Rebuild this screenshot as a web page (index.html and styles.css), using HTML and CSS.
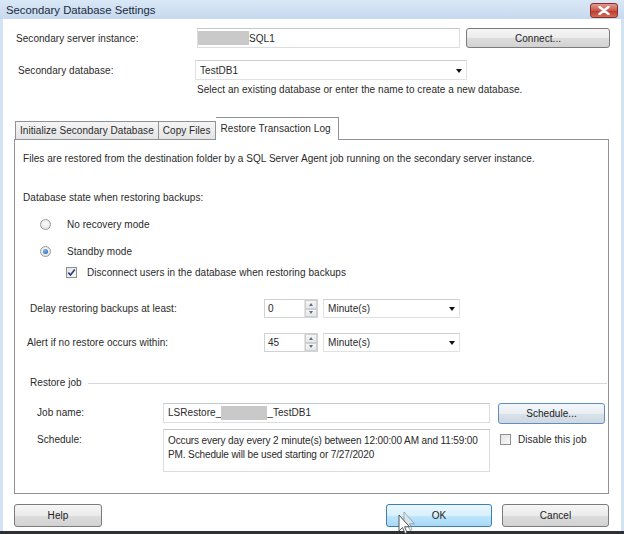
FILE: index.html
```html
<!DOCTYPE html>
<html>
<head>
<meta charset="utf-8">
<link rel="stylesheet" href="styles.css">
</head>
<body>
<div class="window">
  <div class="titlebar">
    <span class="title">Secondary Database Settings</span>
    <div class="close">
      <svg width="12" height="9" viewBox="0 0 12 9"><path d="M1.5 1 L10.5 8 M10.5 1 L1.5 8" stroke="#fff" stroke-width="2.4" stroke-linecap="round"/></svg>
    </div>
  </div>
  <div class="client">
    <div class="row r1">
      <span class="lbl l1">Secondary server instance:</span>
      <div class="field server"><span class="redact"></span><span>SQL1</span></div>
      <div class="btn connect">Connect...</div>
    </div>
    <div class="row r2">
      <span class="lbl l2">Secondary database:</span>
      <div class="combo db"><span>TestDB1</span><span class="arrow"></span></div>
    </div>
    <div class="hint">Select an existing database or enter the name to create a new database.</div>

    <div class="tabs">
      <div class="tab">Initialize Secondary Database</div>
      <div class="tab">Copy Files</div>
      <div class="tab active">Restore Transaction Log</div>
    </div>
    <div class="panel">
      <div class="p1">Files are restored from the destination folder by a SQL Server Agent job running on the secondary server instance.</div>
      <div class="p2">Database state when restoring backups:</div>
      <div class="opt radio-row r-first"><span class="radio"></span><span>No recovery mode</span></div>
      <div class="opt radio-row r-second"><span class="radio on"></span><span>Standby mode</span></div>
      <div class="opt check-row"><span class="check on"><svg width="9" height="9" viewBox="0 0 9 9"><path d="M1.3 4.6 L3.5 7 L7.8 1.5" fill="none" stroke="#24407a" stroke-width="1.6"/></svg></span><span>Disconnect users in the database when restoring backups</span></div>

      <div class="spinrow delay">
        <span class="slbl sl1">Delay restoring backups at least:</span>
        <div class="spin"><span class="sval">0</span><span class="sbtns"><span class="sup"></span><span class="sdn"></span></span></div>
        <div class="combo unit"><span>Minute(s)</span><span class="arrow"></span></div>
      </div>
      <div class="spinrow alert">
        <span class="slbl sl2">Alert if no restore occurs within:</span>
        <div class="spin"><span class="sval">45</span><span class="sbtns"><span class="sup"></span><span class="sdn"></span></span></div>
        <div class="combo unit"><span>Minute(s)</span><span class="arrow"></span></div>
      </div>

      <div class="group"><span>Restore job</span><span class="gline"></span></div>

      <div class="jobrow">
        <span class="jlbl">Job name:</span>
        <div class="field jobname"><span>LSRestore_</span><span class="redact r2b"></span><span>_TestDB1</span></div>
        <div class="btn sched">Schedule...</div>
      </div>
      <div class="jobrow schedrow">
        <span class="jlbl">Schedule:</span>
        <div class="field schedtext">Occurs every day every 2 minute(s) between 12:00:00 AM and 11:59:00<br>PM. Schedule will be used starting or 7/27/2020</div>
        <div class="disable"><span class="check"></span><span>Disable this job</span></div>
      </div>
    </div>

    <div class="footer">
      <div class="btn help">Help</div>
      <div class="spacer"></div>
      <div class="btn ok">OK
        <svg class="cursor" width="22" height="24" viewBox="0 0 22 24">
          <path d="M6 1 L6 17 L9.5 13.5 L12 19.5 L14 18.6 L11.6 12.8 L16.5 12.8 Z" fill="#e8e8e8" stroke="#777" stroke-width="0.8" opacity="0.7"/>
          <path d="M1 4 L1 20 L4.5 16.5 L7 22.5 L9 21.6 L6.6 15.8 L11.5 15.8 Z" fill="#fff" stroke="#444" stroke-width="0.9"/>
        </svg>
      </div>
      <div class="btn cancel">Cancel</div>
    </div>
  </div>
  <div class="taskstrip"></div>
</div>
</body>
</html>
```

FILE: styles.css
```css
* { box-sizing: border-box; }
html, body { margin: 0; padding: 0; }
body {
  width: 624px;
  height: 534px;
  overflow: hidden;
  font-family: "Liberation Sans", Arial, sans-serif;
  font-size: 10px;
  letter-spacing: 0.05px;
  color: #2a2a2a;
  background: #d3e3f4;
}
.window {
  width: 624px;
  height: 534px;
  display: flex;
  flex-direction: column;
}
.titlebar {
  height: 19px;
  flex: none;
  display: flex;
  align-items: center;
  padding-left: 6px;
  background: linear-gradient(#dae8f6, #c6d9ef);
  position: relative;
}
.title {
  font-size: 11.3px;
  color: #1b2a3c;
  letter-spacing: 0;
}
.close {
  position: absolute;
  right: 6px;
  top: 3px;
  width: 28px;
  height: 15px;
  border: 1px solid #8a2f2a;
  border-radius: 3px;
  background: linear-gradient(#e49a8e, #c8574a 50%, #b93a2c 51%, #d26b57);
  display: flex;
  align-items: center;
  justify-content: center;
}
.client {
  flex: 1;
  margin: 0 3px;
  background: #ffffff;
  padding: 9px 11px 0 11px;
  display: flex;
  flex-direction: column;
}
.taskstrip {
  height: 3px;
  flex: none;
  background: #2e3033;
}
.row {
  display: flex;
  align-items: center;
  height: 20px;
}
.r2 { margin-top: 12px; }
.lbl { width: 183px; padding-left: 2px; }
.l2 { padding-left: 4px; }
.field {
  border: 1px solid #dadde1;
  border-top-color: #c4c8cc;
  background: #fff;
  height: 20px;
  display: flex;
  align-items: center;
}
.server { width: 263px; padding-left: 0; }
.redact {
  display: inline-block;
  width: 51px;
  height: 14px;
  background: #c9c9c9;
}
.btn {
  height: 20px;
  border: 1px solid #7b7b7b;
  border-radius: 3px;
  background: linear-gradient(#f6f6f6, #ebebeb 50%, #dddddd 51%, #d2d2d2);
  display: flex;
  align-items: center;
  justify-content: center;
  color: #1c1c1c;
}
.connect { width: 144px; margin-left: 6px; }
.combo {
  border: 1px solid #dfe2e5;
  border-top-color: #ccd0d4;
  height: 20px;
  display: flex;
  align-items: center;
  justify-content: space-between;
  padding-left: 4px;
  padding-right: 4px;
  background: #fff;
}
.db { width: 272px; margin-left: -2px; }
.arrow {
  width: 0;
  height: 0;
  border-left: 3.5px solid transparent;
  border-right: 3.5px solid transparent;
  border-top: 4px solid #111;
  margin-top: 1px;
}
.hint { margin-top: 4px; padding-left: 183px; line-height: 12px; }

.tabs {
  margin-top: 21px;
  height: 22px;
  display: flex;
  align-items: flex-end;
  padding-left: 1px;
}
.tab {
  height: 18px;
  border: 1px solid #8f9296;
  border-bottom: none;
  border-right: none;
  padding: 0 4px;
  display: flex;
  align-items: center;
  background: linear-gradient(#f5f5f5, #e4e4e4);
}
.tab:nth-child(2) { border-right: 1px solid #8f9296; }
.tab.active {
  height: 23px;
  background: #fff;
  margin-bottom: -1px;
  padding: 0 7px 0 5px;
  align-items: flex-start;
  padding-top: 5px;
  position: relative;
  z-index: 1;
  border-left: none;
  border-right: 1px solid #8f9296;
}
.panel {
  height: 355px;
  width: 595px;
  border: 1px solid #8f9296;
  background: #fff;
  padding-left: 8px;
  display: flex;
  flex-direction: column;
}
.p1 { margin-top: 13px; line-height: 12px; }
.p2 { margin-top: 27px; line-height: 12px; }
.opt { display: flex; align-items: center; height: 14px; }
.r-first { margin-top: 13px; padding-left: 17px; }
.r-second { margin-top: 13px; padding-left: 17px; }
.radio {
  width: 11px;
  height: 11px;
  border-radius: 50%;
  border: 1px solid #9a9a9a;
  background: radial-gradient(circle at 50% 40%, #ffffff, #dcdcdc);
  margin-right: 16px;
  position: relative;
}
.radio.on::after {
  content: "";
  position: absolute;
  left: 2px; top: 2px;
  width: 5px; height: 5px;
  border-radius: 50%;
  background: radial-gradient(circle at 40% 35%, #7fb5ec, #1d5aa6);
}
.check-row { margin-top: 7px; padding-left: 43px; }
.check {
  width: 11px;
  height: 11px;
  border: 1px solid #8f8f8f;
  background: linear-gradient(135deg, #e3e3e3, #fbfbfb);
  margin-right: 10px;
  display: flex;
  align-items: center;
  justify-content: center;
}
.spinrow { display: flex; align-items: center; height: 19px; }
.delay { margin-top: 20px; }
.alert { margin-top: 15px; }
.slbl { width: 241px; }
.sl1 { padding-left: 7px; }
.sl2 { padding-left: 4px; }
.spin {
  width: 54px;
  height: 19px;
  border: 1px solid #cfd3d7;
  display: flex;
  align-items: center;
  justify-content: space-between;
  padding-left: 3px;
}
.sbtns {
  width: 13px;
  height: 17px;
  display: flex;
  flex-direction: column;
  border-left: 1px solid #e2e2e2;
}
.sup, .sdn {
  flex: 1;
  display: flex;
  align-items: center;
  justify-content: center;
  background: linear-gradient(#f6f6f6, #e6e6e6);
  border: 1px solid #cfcfcf;
}
.sup::after {
  content: "";
  border-left: 2.5px solid transparent;
  border-right: 2.5px solid transparent;
  border-bottom: 3px solid #5a6f8e;
}
.sdn::after {
  content: "";
  border-left: 2.5px solid transparent;
  border-right: 2.5px solid transparent;
  border-top: 3px solid #5a6f8e;
}
.unit { width: 137px; margin-left: 5px; height: 19px; }

.group {
  margin-top: 25px;
  display: flex;
  align-items: center;
  line-height: 12px;
  padding-left: 7px;
  padding-right: 1px;
}
.gline { flex: 1; height: 1px; background: #d5d9dd; margin-left: 6px; }

.jobrow { display: flex; align-items: center; padding-left: 14px; margin-top: 12px; }
.jlbl { width: 126px; }
.jobname { width: 327px; height: 20px; padding-left: 4px; }
.r2b { width: 46px; height: 14px; }
.sched { width: 107px; margin-left: 8px; height: 21px; margin-top: 2px; border-color: #5c8fbf; background: linear-gradient(#f4f8fb, #e9eef3 50%, #d9e2ea 51%, #cfd8e0); }
.schedrow { margin-top: 5px; align-items: flex-start; }
.schedrow .jlbl { margin-top: 5px; }
.schedtext {
  width: 327px;
  height: 43px;
  display: block;
  padding: 4px 2px 0 4px;
  line-height: 14px;
  white-space: nowrap;
  overflow: hidden;
  letter-spacing: -0.12px;
}
.disable {
  display: flex;
  align-items: center;
  margin-left: 10px;
  margin-top: 5px;
}
.disable .check { margin-right: 7px; }

.footer {
  margin-top: 10px;
  display: flex;
  align-items: center;
  height: 23px;
}
.footer .btn { height: 23px; }
.help { width: 88px; }
.spacer { flex: 1; }
.ok {
  width: 106px;
  border-color: #3c7fb1;
  background: linear-gradient(#eaf6fd, #d9f0fc 50%, #bee6fd 51%, #a7d9f5);
  position: relative;
}
.cancel { width: 107px; margin-left: 10px; margin-right: 1px; }
.cursor {
  position: absolute;
  left: 11px;
  top: 6px;
}
```
